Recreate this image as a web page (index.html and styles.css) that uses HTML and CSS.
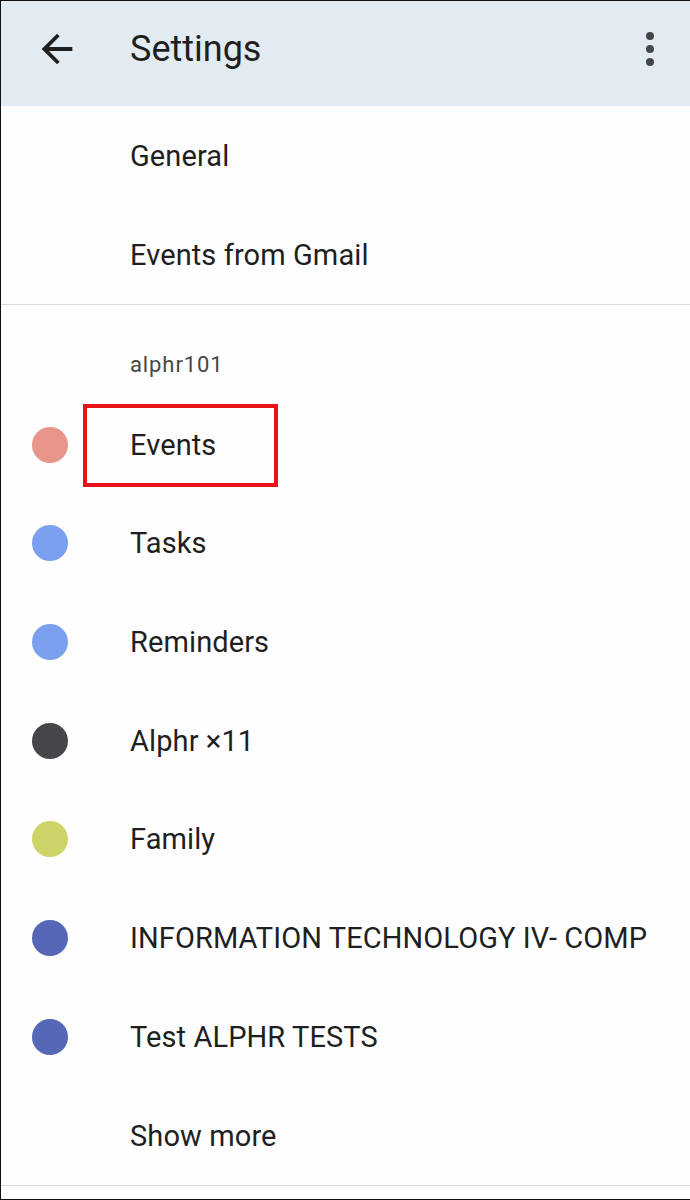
FILE: index.html
```html
<!DOCTYPE html>
<html lang="en">
<head>
<meta charset="utf-8">
<title>Settings</title>
<link rel="stylesheet" href="styles.css">
</head>
<body>
<div class="screen">
  <header class="appbar">
    <svg class="back" viewBox="0 0 24 24" width="46" height="46"><path d="M20 11H7.83l5.59-5.59L12 4l-8 8 8 8 1.41-1.41L7.83 13H20v-2z" fill="#1f1f1f"/></svg>
    <h1 class="title">Settings</h1>
    <div class="more"><span></span><span></span><span></span></div>
  </header>
  <section class="group top">
    <div class="row"><span class="label">General</span></div>
    <div class="row"><span class="label">Events from Gmail</span></div>
  </section>
  <section class="group">
    <div class="account">alphr101</div>
    <div class="row"><span class="dot c-events"></span><span class="label">Events</span><span class="mark"></span></div>
    <div class="row"><span class="dot c-tasks"></span><span class="label">Tasks</span></div>
    <div class="row"><span class="dot c-tasks"></span><span class="label">Reminders</span></div>
    <div class="row"><span class="dot c-dark"></span><span class="label">Alphr ×11</span></div>
    <div class="row"><span class="dot c-family"></span><span class="label">Family</span></div>
    <div class="row"><span class="dot c-indigo"></span><span class="label">INFORMATION TECHNOLOGY IV- COMP</span></div>
    <div class="row"><span class="dot c-indigo"></span><span class="label">Test ALPHR TESTS</span></div>
    <div class="row"><span class="label">Show more</span></div>
  </section>
</div>
</body>
</html>
```
FILE: styles.css
```css
html, body {
  margin: 0;
  padding: 0;
  background: #fff;
}
.screen {
  width: 690px;
  height: 1200px;
  box-sizing: border-box;
  border-top: 1px solid #111;
  border-left: 1px solid #111;
  border-bottom: 1px solid #111;
  font-family: Roboto, "Noto Sans", sans-serif;
  color: #1f1f1f;
  overflow: hidden;
  background: #fefefe;
}
.appbar {
  height: 105px;
  background: #e3ebf2;
  display: flex;
  align-items: center;
  padding-bottom: 10px;
  box-sizing: border-box;
}
.back {
  margin-left: 33px;
  flex: none;
}
.title {
  margin: 0 0 0 50px;
  font-weight: 400;
  font-size: 36px;
  color: #1f1f1f;
  flex: 1;
}
.more {
  display: flex;
  flex-direction: column;
  gap: 5px;
  margin-right: 36px;
}
.more span {
  width: 8px;
  height: 8px;
  border-radius: 50%;
  background: #444649;
}
.group {
  border-bottom: 1px solid #dadce0;
}
.group.top {
  padding-top: 1px;
}
.row {
  height: 98.7px;
  display: flex;
  align-items: center;
  position: relative;
}
.label {
  margin-left: 129px;
  font-size: 29px;
  letter-spacing: 0.1px;
  color: #1f1f1f;
  white-space: nowrap;
}
.dot + .label {
  margin-left: 62px;
}
.dot {
  width: 36px;
  height: 36px;
  border-radius: 50%;
  margin-left: 31px;
  flex: none;
}
.c-events { background: #e8968c; }
.c-tasks { background: #7ba0f0; }
.c-dark { background: #46474b; }
.c-family { background: #cdd366; }
.c-indigo { background: #5667b8; }
.account {
  height: 90px;
  padding-top: 28px;
  box-sizing: border-box;
  display: flex;
  align-items: center;
  padding-left: 129px;
  font-size: 22px;
  letter-spacing: 0.9px;
  color: #444746;
}
.mark {
  position: absolute;
  left: 82px;
  top: 9px;
  width: 195px;
  height: 83px;
  box-sizing: border-box;
  border: 4px solid #e8121a;
}
```
